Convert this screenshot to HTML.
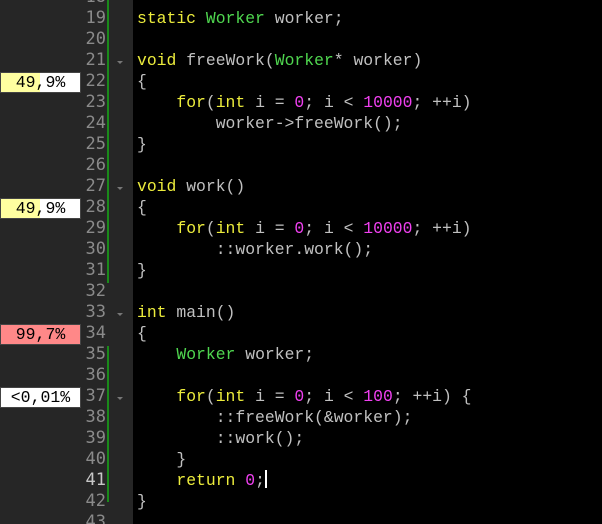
<!DOCTYPE html>
<html style="margin:0;width:602px;height:524px;overflow:hidden"><head><style>
body{margin:0;width:602px;height:524px;overflow:hidden;background:#000;position:relative;font-family:"Liberation Mono","DejaVu Sans Mono",monospace;}
#g{position:absolute;left:0;top:0;width:133px;height:524px;background:#262626;}
.bar{position:absolute;left:107px;width:2px;background:#1a8a1a;}
.ln{position:absolute;left:56px;width:50px;text-align:right;color:#8a8a8a;font-size:17px;line-height:21px;font-family:"DejaVu Sans Mono","Liberation Mono",monospace;}
.f{position:absolute;left:117px;width:0;height:0;border-left:3px solid transparent;border-right:3px solid transparent;border-top:3px solid #777;}
.p{position:absolute;left:0;width:79px;height:19px;border:1px solid #444;background:#fff;font-size:16.5px;line-height:19px;text-align:center;color:#000;}
#c{position:absolute;left:137px;top:-13.5px;height:540px;overflow:hidden;font-size:16.4px;line-height:21px;color:#c0c0c0;white-space:pre;}
.k{color:#ecec3c}.t{color:#4fd64f}.n{color:#f040f0}
.cur{display:inline-block;width:2px;height:18px;background:#fff;vertical-align:-3px;}
</style></head><body>
<div id="g"></div>
<div class="bar" style="top:0;height:283px"></div>
<div class="bar" style="top:346px;height:156px"></div>
<div class="p" style="top:72px;background:linear-gradient(90deg,#ffffa0 39px,#fff 39px)">49,9%</div>
<div class="p" style="top:198px;background:linear-gradient(90deg,#ffffa0 39px,#fff 39px)">49,9%</div>
<div class="p" style="top:324px;background:#ff8888">99,7%</div>
<div class="p" style="top:387px">&lt;0,01%</div>
<div class="f" style="top:61px"></div>
<div class="f" style="top:187px"></div>
<div class="f" style="top:313px"></div>
<div class="f" style="top:397px"></div>
<div class="ln" style="top:-13.5px">18</div>
<div class="ln" style="top:7.5px">19</div>
<div class="ln" style="top:28.5px">20</div>
<div class="ln" style="top:49.5px">21</div>
<div class="ln" style="top:70.5px">22</div>
<div class="ln" style="top:91.5px">23</div>
<div class="ln" style="top:112.5px">24</div>
<div class="ln" style="top:133.5px">25</div>
<div class="ln" style="top:154.5px">26</div>
<div class="ln" style="top:175.5px">27</div>
<div class="ln" style="top:196.5px">28</div>
<div class="ln" style="top:217.5px">29</div>
<div class="ln" style="top:238.5px">30</div>
<div class="ln" style="top:259.5px">31</div>
<div class="ln" style="top:280.5px">32</div>
<div class="ln" style="top:301.5px">33</div>
<div class="ln" style="top:322.5px">34</div>
<div class="ln" style="top:343.5px">35</div>
<div class="ln" style="top:364.5px">36</div>
<div class="ln" style="top:385.5px">37</div>
<div class="ln" style="top:406.5px">38</div>
<div class="ln" style="top:427.5px">39</div>
<div class="ln" style="top:448.5px">40</div>
<div class="ln" style="top:469.5px;color:#c8c8c8">41</div>
<div class="ln" style="top:490.5px">42</div>
<div class="ln" style="top:511.5px;height:12px;overflow:hidden">43</div>
<div id="c">
<span class="k">static</span> <span class="t">Worker</span> worker;

<span class="k">void</span> freeWork(<span class="t">Worker</span>* worker)
{
    <span class="k">for</span>(<span class="k">int</span> i = <span class="n">0</span>; i &lt; <span class="n">10000</span>; ++i)
        worker-&gt;freeWork();
}

<span class="k">void</span> work()
{
    <span class="k">for</span>(<span class="k">int</span> i = <span class="n">0</span>; i &lt; <span class="n">10000</span>; ++i)
        ::worker.work();
}

<span class="k">int</span> main()
{
    <span class="t">Worker</span> worker;

    <span class="k">for</span>(<span class="k">int</span> i = <span class="n">0</span>; i &lt; <span class="n">100</span>; ++i) {
        ::freeWork(&amp;worker);
        ::work();
    }
    <span class="k">return</span> <span class="n">0</span>;<span class="cur"></span>
}</div>
</body></html>
